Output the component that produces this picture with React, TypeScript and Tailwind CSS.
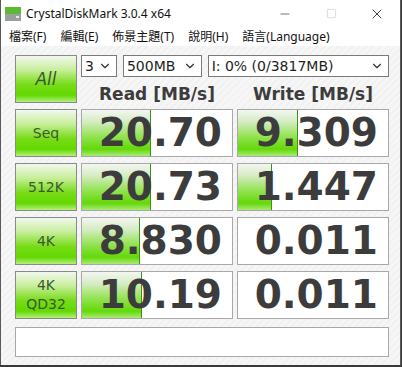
import { ChevronDown, Minus, Square, X } from "lucide-react";

interface Row {
  label: string[];
  read: string;
  readBar: number;
  write: string;
  writeBar: number;
}

const rows: Row[] = [
  { label: ["Seq"], read: "20.70", readBar: 69, write: "9.309", writeBar: 60 },
  { label: ["512K"], read: "20.73", readBar: 69, write: "1.447", writeBar: 34 },
  { label: ["4K"], read: "8.830", readBar: 58, write: "0.011", writeBar: 0 },
  { label: ["4K", "QD32"], read: "10.19", readBar: 60, write: "0.011", writeBar: 0 },
];

const menus = ["檔案(F)", "編輯(E)", "佈景主題(T)", "說明(H)", "語言(Language)"];

const uiFont = "font-['Segoe_UI','Noto_Sans','Noto_Sans_CJK_TC',sans-serif]";
const numFont = "font-['DejaVu_Sans',Verdana,sans-serif]";

const GreenButton = ({ lines, italic }: { lines: string[]; italic?: boolean }) => (
  <div
    className={`h-[48px] border border-[#8a8a8a] flex flex-col items-center justify-center text-[#3b5a2c] leading-[19px] bg-[linear-gradient(to_bottom,#f2f8ee_0%,#c8ee9c_30%,#78dc18_62%,#62d800_85%,#b4f07c_100%)] ${italic ? "italic text-[17px]" : "text-[14px]"} ${numFont}`}
  >
    {lines.map((l) => (
      <span key={l}>{l}</span>
    ))}
  </div>
);

const ValueCell = ({ value, bar }: { value: string; bar: number }) => (
  <div className="relative h-[48px] bg-white border border-[#a8a8a8] overflow-hidden">
    {bar > 0 && (
      <div
        className="absolute left-0 top-0 bottom-0 border-r border-[#3f8f1c] bg-[linear-gradient(to_bottom,#f4f6f2_0%,#d6ecc4_25%,#8ee24a_60%,#64d808_85%,#a8ea78_100%)]"
        style={{ width: bar }}
      />
    )}
    <div
      className={`relative h-full flex items-center justify-end pr-[10px] text-[39px] font-bold text-[#3c3c3c] ${numFont}`}
    >
      {value}
    </div>
  </div>
);

const Select = ({ text, width }: { text: string; width: string }) => (
  <div
    className={`${width} h-[22px] bg-white border border-[#7a7a7a] flex items-center justify-between pl-[3px] pr-[4px] text-[14px] text-[#1e1e1e] ${numFont}`}
  >
    <span>{text}</span>
    <ChevronDown className="w-[14px] h-[14px] text-[#333]" strokeWidth={2} />
  </div>
);

export default function App() {
  return (
    <div className="w-[402px] h-[367px] bg-[#3a3a3a] overflow-hidden">
      <div className="w-[401px] h-[365px] bg-white border-l border-r border-[#5a5a5a] flex flex-col">
        {/* title bar */}
        <div className={`h-[27px] flex items-center ${uiFont}`}>
          <svg width="16" height="14" viewBox="0 0 16 14" className="ml-[4px]">
            <rect x="0" y="0" width="16" height="7" fill="#5fb832" />
            <rect x="0" y="7" width="16" height="7" fill="#9aa0a0" />
            <rect x="11" y="9" width="3" height="2" fill="#e8e8e8" />
          </svg>
          <span className="ml-[5px] text-[12px] text-[#111]">CrystalDiskMark 3.0.4 x64</span>
          <div className="ml-auto flex items-center">
            <div className="w-[46px] flex justify-center">
              <Minus className="w-[14px] h-[14px] text-[#111]" strokeWidth={1} />
            </div>
            <div className="w-[46px] flex justify-center">
              <Square className="w-[11px] h-[11px] text-[#c0c0c0]" strokeWidth={1.2} />
            </div>
            <div className="w-[46px] flex justify-center">
              <X className="w-[16px] h-[16px] text-[#111]" strokeWidth={1.2} />
            </div>
          </div>
        </div>

        {/* menu bar */}
        <div className={`h-[19px] flex items-center pl-[8px] gap-[14px] text-[12px] text-[#111] ${uiFont}`}>
          {menus.map((m) => (
            <span key={m}>{m}</span>
          ))}
        </div>

        {/* body */}
        <div className="flex-1 bg-[repeating-linear-gradient(135deg,#f6f6f6_0px,#f6f6f6_3px,#f1f1f1_3px,#f1f1f1_5px)] pl-[14px] pt-[9px]">
          <div className="grid grid-cols-[62px_152px_152px] gap-x-[4px] gap-y-[6px]">
            <GreenButton lines={["All"]} italic />
            <div className="col-span-2 h-[48px] flex flex-col">
              <div className="flex gap-[6px]">
                <Select text="3" width="w-[36px]" />
                <Select text="500MB" width="w-[79px]" />
                <Select text="I: 0% (0/3817MB)" width="w-[182px]" />
              </div>
              <div className={`flex-1 grid grid-cols-2 gap-x-[4px] items-center pt-[5px] text-[17px] font-bold text-[#3c3c3c] ${numFont}`}>
                <span className="text-center">Read [MB/s]</span>
                <span className="text-center">Write [MB/s]</span>
              </div>
            </div>
            {rows.map((r) => (
              <div key={r.label.join()} className="contents">
                <GreenButton lines={r.label} />
                <ValueCell value={r.read} bar={r.readBar} />
                <ValueCell value={r.write} bar={r.writeBar} />
              </div>
            ))}
          </div>
          <div className="mt-[8px] w-[374px] h-[30px] bg-white border border-[#a8a8a8]" />
        </div>
      </div>
    </div>
  );
}
